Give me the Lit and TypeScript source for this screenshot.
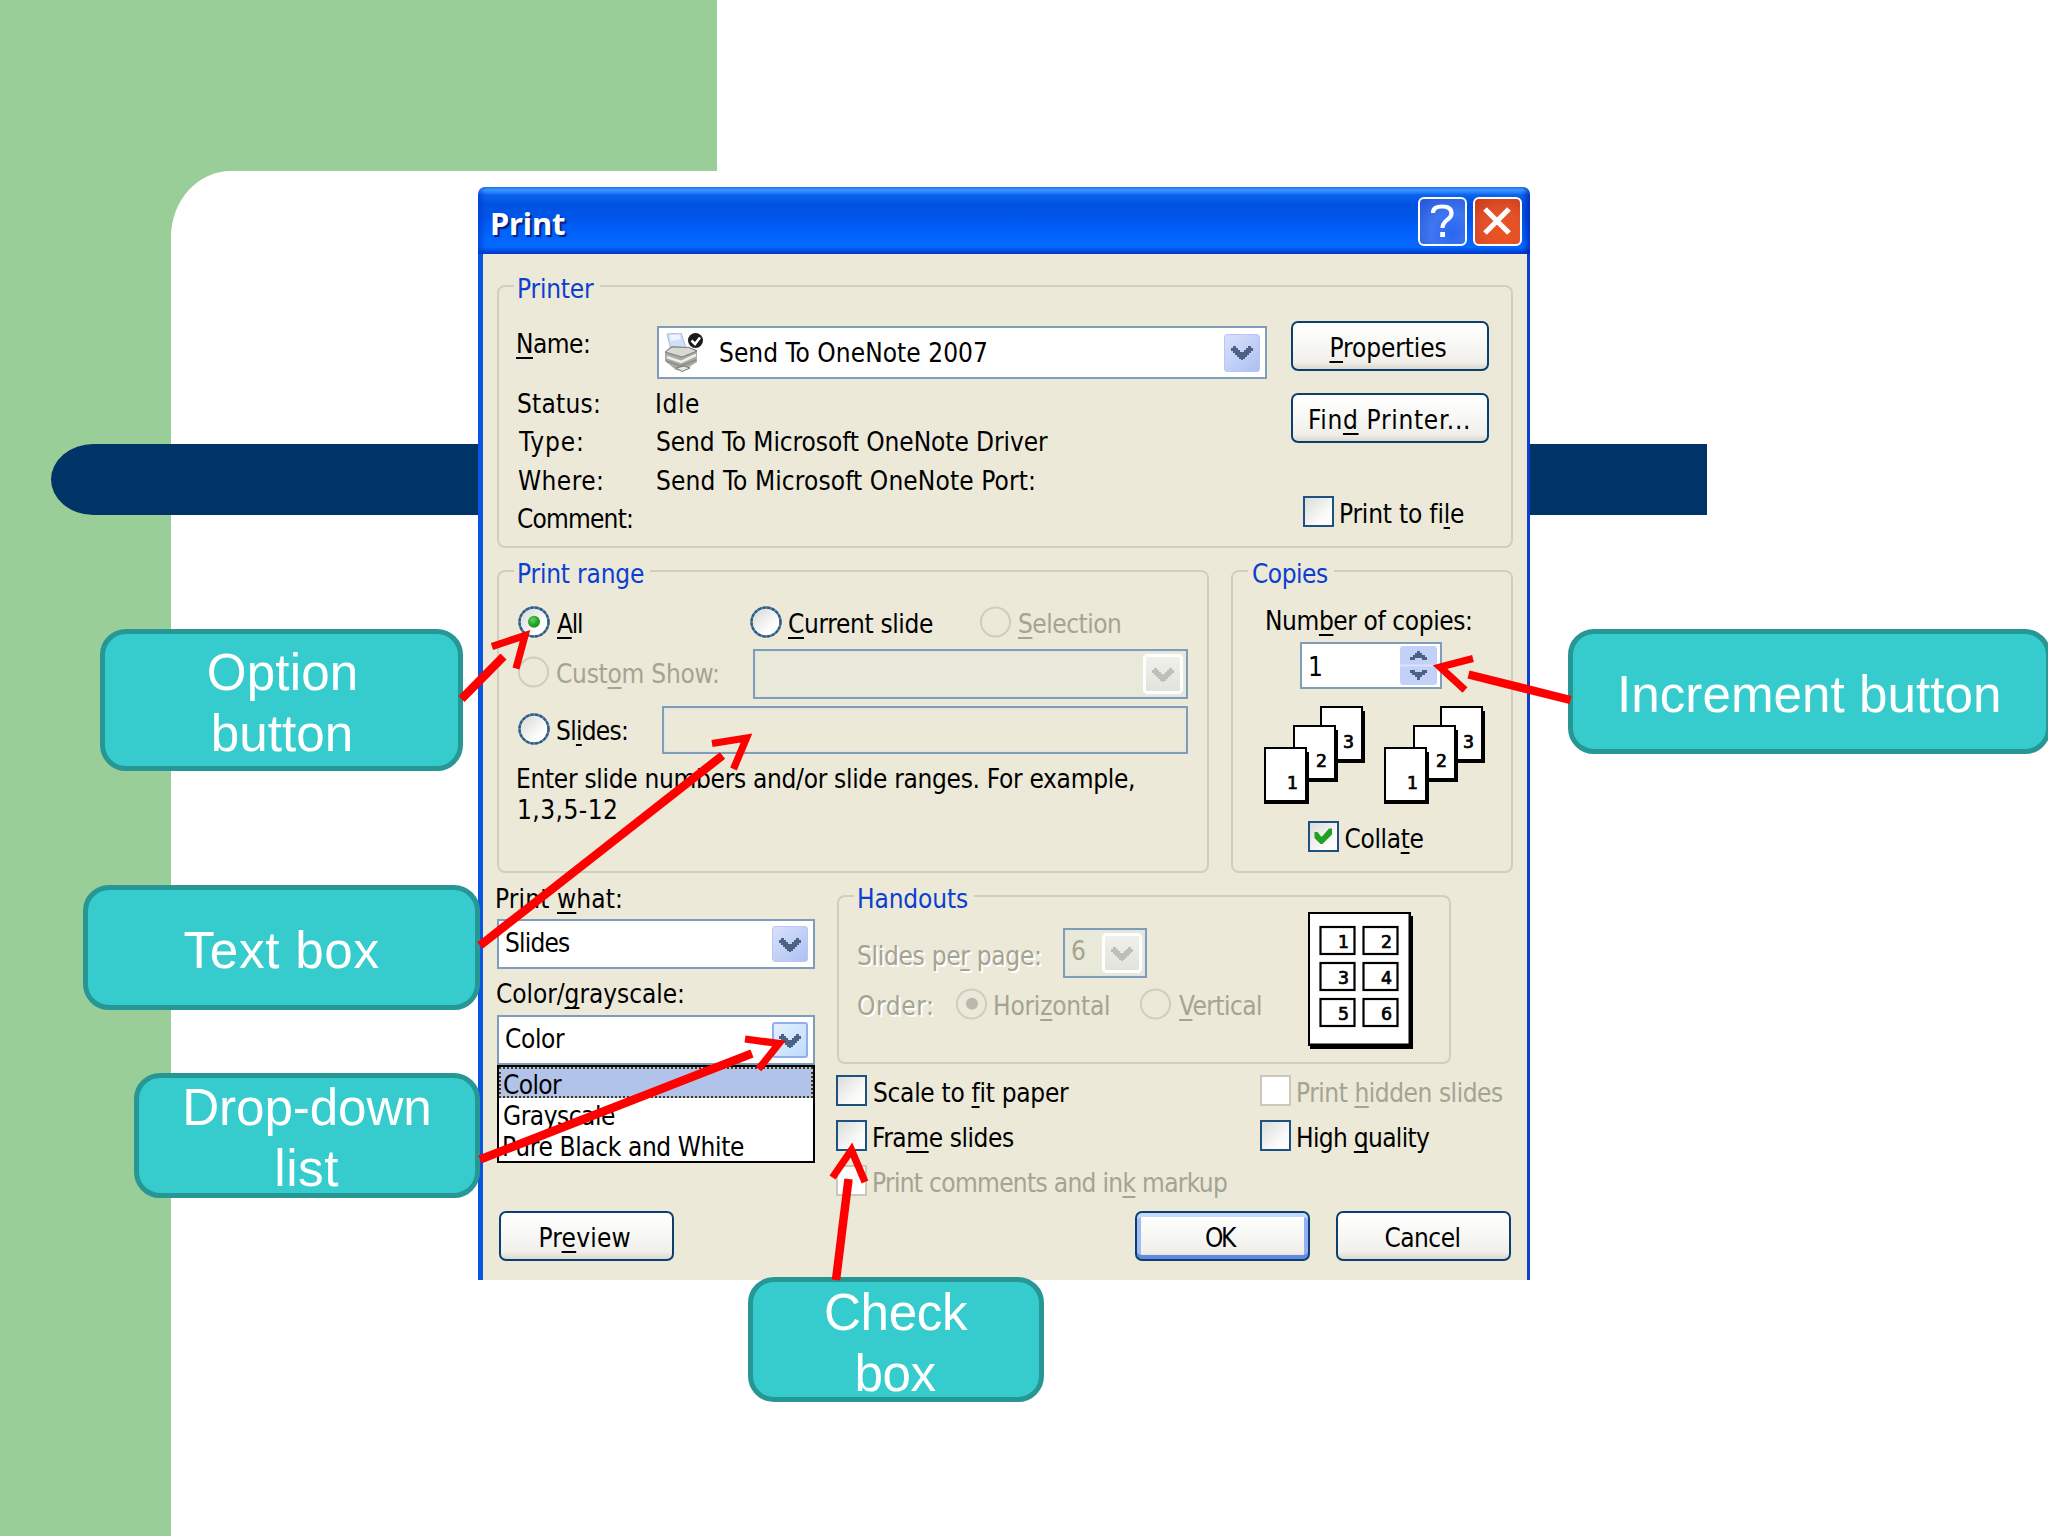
import { LitElement, html, css, svg, nothing } from "lit";
import { customElement, property } from "lit/decorators.js";
import { classMap } from "lit/directives/class-map.js";

const UI_FONT = '"DejaVu Sans Condensed", "DejaVu Sans", sans-serif';
const TITLE_FONT = '"Noto Sans", "Open Sans", sans-serif';
const CALLOUT_FONT = '"Liberation Sans", Arial, sans-serif';

const pen = document.createElement("canvas").getContext("2d")!;

/** One line of text whose drawn width is `w`; "&" marks the mnemonic letter. */
@customElement("fit-text")
class FitText extends LitElement {
  @property() t = "";
  @property({ type: Number }) w = 0;
  @property({ type: Number }) size = 26;
  @property() face = "ui";

  static styles = css`
    :host { display: block; flex: none; height: 30px; line-height: 32px; white-space: pre; }
    .ui { font-family: "DejaVu Sans Condensed", "DejaVu Sans", sans-serif; }
    .title { font-family: "Noto Sans", "Open Sans", sans-serif; font-weight: 700; }
    .callout { font-family: "Liberation Sans", Arial, sans-serif; }
    .line { display: block; line-height: inherit; }
    u { text-decoration: underline; text-decoration-thickness: 2px; text-underline-offset: 4px; text-decoration-skip-ink: none; }
  `;

  render() {
    const plain = this.t.replace("&", "");
    const font = this.face === "title" ? TITLE_FONT : this.face === "callout" ? CALLOUT_FONT : UI_FONT;
    pen.font = `${this.face === "title" ? "bold " : ""}${this.size}px ${font}`;
    const m = pen.measureText(plain);
    const ink = m.actualBoundingBoxLeft + m.actualBoundingBoxRight;
    const gap = plain.length > 1 ? (this.w - ink) / (plain.length - 1) : 0;
    const at = this.t.indexOf("&");
    return html`<span
      class="line ${this.face}"
      style="width:${this.w}px;font-size:${this.size}px;letter-spacing:${gap.toFixed(3)}px;text-indent:${(m.actualBoundingBoxLeft + 1).toFixed(2)}px"
      >${at < 0
        ? plain
        : html`${this.t.slice(0, at)}<u>${this.t[at + 1]}</u>${this.t.slice(at + 2)}`}</span>`;
  }
}

@customElement("xp-button")
class XpButton extends LitElement {
  @property() t = "";
  @property({ type: Number }) w = 0;
  @property({ type: Boolean }) primary = false;

  static styles = css`
    :host { display: block; flex: none; height: 50px; }
    .face {
      box-sizing: border-box; height: 100%; display: flex; justify-content: center; padding: 9px 4px 0 0;
      border: 2.5px solid #0b3f6f; border-radius: 7px; color: #000;
      background: linear-gradient(#fff 0%, #f8f8f5 45%, #f0efea 85%, #dcd8cd 100%);
    }
    .primary { box-shadow: inset 0 5px 0 -1px #c4d9fb, inset 0 -5px 0 -1px #6289e2, inset 5px 0 0 -1px #a3bdf3, inset -5px 0 0 -1px #94b0f0; }
  `;
  render() {
    return html`<div class=${classMap({ face: true, primary: this.primary })}><fit-text t=${this.t} w=${this.w}></fit-text></div>`;
  }
}

@customElement("xp-check")
class XpCheck extends LitElement {
  @property() t = "";
  @property({ type: Number }) w = 0;
  @property({ type: Boolean }) checked = false;
  @property({ type: Boolean }) disabled = false;

  static styles = css`
    :host { display: block; flex: none; height: 31px; }
    .row { display: flex; gap: 6px; color: #000; }
    .box { flex: none; box-sizing: border-box; width: 31px; height: 31px; border: 2px solid #1d5180; background: linear-gradient(135deg, #dcdcd9, #fbfbfa 70%, #fff); }
    .off { color: #a5a392; }
    .off .box { border-color: #cac8bb; background: #fff; }
    fit-text { margin-top: 2px; }
    svg { display: block; }
  `;
  render() {
    return html`<div class=${classMap({ row: true, off: this.disabled })}>
      <div class="box">
        ${this.checked
          ? html`<svg width="27" height="27" viewBox="0 0 27 27"><path fill="#21a121" d="M4.500 9h3l3.500 4.500h1l7-8h3v6L12.500 21h-2L4.500 15z" /></svg>`
          : nothing}
      </div>
      <fit-text t=${this.t} w=${this.w}></fit-text>
    </div>`;
  }
}

@customElement("xp-radio")
class XpRadio extends LitElement {
  @property() t = "";
  @property({ type: Number }) w = 0;
  @property({ type: Boolean }) checked = false;
  @property({ type: Boolean }) disabled = false;

  static styles = css`
    :host { display: block; flex: none; height: 32px; }
    .row { display: flex; gap: 6px; color: #000; }
    .off { color: #a5a392; }
    fit-text { margin-top: 2px; }
    svg { display: block; flex: none; }
  `;
  render() {
    return html`<div class=${classMap({ row: true, off: this.disabled })}>
      <svg width="32" height="32" viewBox="0 0 32 32">
        <defs>
          <linearGradient id="f" x1="0" y1="0" x2="1" y2="1">
            <stop offset="0.1" stop-color="#dadad6" /><stop offset="0.7" stop-color="#fff" />
          </linearGradient>
          <radialGradient id="g" cx="0.4" cy="0.35">
            <stop offset="0" stop-color="#5fd45f" /><stop offset="1" stop-color="#1f9a1f" />
          </radialGradient>
        </defs>
        ${this.disabled
          ? svg`<circle cx="15.5" cy="16" r="14.6" fill="none" stroke="#cfcdbd" stroke-width="2"/>`
          : svg`<circle cx="16" cy="16" r="14.5" fill="url(#f)" stroke="#5d83a3" stroke-width="2.4"/>
                <circle cx="16" cy="16" r="14.5" fill="none" stroke="#2b5b86" stroke-width="2.2" stroke-dasharray="3.2 1.4"/>`}
        ${this.checked
          ? svg`<circle cx="16" cy="15.700" r="6" fill=${this.disabled ? "#b9b8ad" : "url(#g)"}/>`
          : nothing}
      </svg>
      <fit-text t=${this.t} w=${this.w}></fit-text>
    </div>`;
  }
}

@customElement("xp-combo")
class XpCombo extends LitElement {
  @property() t = "";
  @property({ type: Number }) w = 0;
  @property({ type: Boolean }) disabled = false;
  @property({ type: Boolean }) hot = false;

  static styles = css`
    :host { display: block; flex: none; height: 50px; }
    .frame { box-sizing: border-box; height: 100%; display: flex; align-items: center; border: 2px solid #7f9db9; background: #fff; color: #000; padding: 0 5px 0 6px; }
    .text { flex: 1; display: flex; align-items: center; }
    .text fit-text { margin-top: var(--text-shift, -4px); }
    .drop { flex: none; box-sizing: border-box; width: 36px; height: var(--drop-height, 36px); border-radius: 3px; border: 1px solid #b9c8f3; background: linear-gradient(135deg, #d8e1fb, #b9c9f5 75%, #aebef0); display: flex; align-items: center; justify-content: center; color: #4d6185; }
    .hot .drop { border: 2px solid #8fb0ea; background: linear-gradient(135deg, #e2f0ff, #bfdcfb); }
    .off { background: #e8e9d8; color: #a5a392; padding-right: 2px; box-shadow: inset 0 0 0 1px #dfe5e4; }
    .off .drop { border: 2px solid #fff; outline: 1px solid #fff; width: 38px; height: 38px; background: linear-gradient(#f0f0ec, #e3e3dd); color: #bfbfba; margin-right: 2px; }
    svg { display: block; }
  `;
  render() {
    return html`<div class=${classMap({ frame: true, off: this.disabled, hot: this.hot })}>
      <slot name="icon"></slot>
      <div class="text">${this.t ? html`<fit-text t=${this.t} w=${this.w}></fit-text>` : nothing}</div>
      <div class="drop">
        <svg width="22" height="15" viewBox="0 0 22 15"><path fill="currentColor" d="M0 3h2V1h3v2h2v2h2v2h4V5h2V3h2V1h3v2h2v3h-2v2h-2v2h-2v2h-2v2h-2v1h-2v-1H8v-2H6v-2H4V8H2V6H0z" /></svg>
      </div>
    </div>`;
  }
}

@customElement("xp-group")
class XpGroup extends LitElement {
  @property() t = "";
  @property({ type: Number }) w = 0;
  static styles = css`
    :host { display: block; flex: none; box-sizing: border-box; border: 2px solid #d0cfbe; border-radius: 8px; }
    .legend { width: max-content; margin: -14px 0 0 15px; padding: 0 7px 0 4px; background: #ece9d8; color: #0a3fcf; }
  `;
  render() {
    return html`<div class="legend"><fit-text t=${this.t} w=${this.w}></fit-text></div><slot></slot>`;
  }
}

@customElement("print-dialog")
class PrintDialog extends LitElement {
  static styles = css`
    :host { display: flex; flex-direction: column; box-sizing: border-box; width: 1052px; height: 1093px; color: #000; }
    svg { display: block; flex: none; }
    .bar {
      box-sizing: border-box; height: 67px; flex: none; display: flex; align-items: flex-start; gap: 6px; padding: 10px 8px 0 13px;
      border-radius: 7px 7px 0 0; color: #fff;
      background:
        linear-gradient(90deg, rgba(0,50,200,.55), rgba(0,50,200,0) 8px, rgba(0,50,200,0) calc(100% - 8px), rgba(0,30,170,.7)),
        linear-gradient(#1a6ff0 0, #3a97ff 3px, #2a86fb 5px, #0a62ee 8px, #0053e1 17px, #0055e8 30px, #0060fb 44px, #0468ff 55px, #0468ff 60px, #0050e6 63px, #0038c4 67px);
    }
    .title { flex: 1; padding-top: 10px; text-shadow: 2px 2px 1px #0a1f7c; }
    .cap { box-sizing: border-box; width: 49px; height: 49px; border: 2.5px solid #fff; border-radius: 6px; flex: none; }
    .help { background: radial-gradient(circle at 70% 75%, #2a66f4, #3f76f0 45%, #2453d6 100%); }
    .close { background: radial-gradient(circle at 60% 70%, #ee5420, #e0512b 50%, #c93a18 100%); }
    .body { flex: 1; display: flex; flex-direction: column; background: #ece9d8; border-left: 5px solid #0a55e0; border-right: 3px solid #0b3fcc; padding: 31px 14px 0 14px; }
    .row { display: flex; align-items: flex-start; }

    .printer { height: 263px; }
    .left { margin-left: 18px; }
    .name { margin-top: 23px; }
    .name > fit-text { width: 140px; margin-top: 2px; }
    .device { width: 610px; height: 53px; --text-shift: -1px; --drop-height: 38px; }
    .device svg { margin: 0 15px 0 -1px; }
    .facts { margin-top: 9px; display: grid; grid-template-columns: 139px auto; grid-auto-rows: 38.3px; }
    .actions { display: flex; flex-direction: column; margin: 18px 0 0 24px; }
    .actions xp-button { width: 198px; margin-bottom: 22px; }
    .actions xp-check { margin: 31px 0 0 12px; }

    .middle { margin-top: 22px; gap: 22px; }
    .range { width: 712px; height: 303px; }
    .copies { width: 282px; height: 303px; }
    .options { display: grid; grid-template-columns: 232px 230px auto; margin: 18px 0 0 19px; }
    .custom { margin: 11px 0 0 19px; }
    .custom xp-radio { width: 235px; margin-top: 7px; }
    .custom xp-combo { width: 435px; }
    .slides { margin: 7px 0 0 19px; }
    .slides xp-radio { width: 144px; margin-top: 7px; }
    .field { box-sizing: border-box; width: 526px; height: 48px; border: 2px solid #7f9db9; box-shadow: inset 0 0 0 1px #dfe5e4; }
    .hint { margin: 9px 0 0 18px; display: grid; row-gap: 1px; }
    .hint fit-text + fit-text { margin-left: 1px; }
    .count { margin: 17px 0 0 33px; }
    .spin { box-sizing: border-box; display: flex; justify-content: space-between; width: 142px; height: 47px; margin: 7px 0 0 67px; padding: 2px 3px 0 7px; border: 2px solid #7f9db9; background: #fff; }
    .spin fit-text { margin-top: 5px; }
    .pages { margin: 17px 0 0 31px; }
    .copies xp-check { margin: 16px 0 0 74.500px; }
    .num { font: 400 18px "DejaVu Sans Condensed", "DejaVu Sans", sans-serif; stroke: #000; stroke-width: .7; }

    .what { width: 318px; display: flex; flex-direction: column; }
    .what > fit-text { margin-left: -1px; }
    .l1 { margin-top: 10px; }
    .c1 { margin-top: 6px; }
    .l2 { margin-top: 9px; }
    .c2 { margin-top: 7px; }
    .list { box-sizing: border-box; height: 98px; border: 2.5px solid #000; background: #fff; display: grid; grid-template-rows: 31px 31px 31px; }
    .item { padding-left: 4px; }
    .item fit-text { margin-top: 2px; }
    .on { background: #b2c3e9; outline: 2px dotted #463a18; outline-offset: -2px; }
    .preview { width: 175px; margin: 48px 0 0 2px; }
    .rest { margin-left: 22px; }
    .handouts { width: 614px; height: 169px; margin-top: 22px; }
    .setup { width: 451px; margin-left: 18px; color: #a5a392; text-shadow: none; }
    .emboss { text-shadow: 2px 2px 0 #fff; }
    .per { margin-top: 15px; }
    .per fit-text { width: 206px; margin-top: 12px; }
    .per xp-combo { width: 84px; --text-shift: -6px; }
    .order { margin-top: 10px; }
    .order fit-text { width: 99px; margin-top: 2px; }
    .order xp-radio:first-of-type { width: 184px; }
    .thumb { margin-top: -1px; }
    .checks { margin: 10.500px 0 0 -1px; display: grid; grid-template-columns: 424px auto; row-gap: 14.4px; }
    .foot { margin: 14.500px 0 0 298px; gap: 26px; }
    .foot xp-button { width: 175px; }
  `;

  private page(x: number, y: number, n: number) {
    return svg`<rect x=${x + 2} y=${y + 5} width="43" height="52" fill="#000"/>
      <rect x=${x} y=${y} width="43" height="57" fill="#000"/>
      <rect x=${x + 2} y=${y + 2} width="39" height="51" fill="#fff"/>
      <text class="num" x=${x + 34} y=${y + 42} text-anchor="end" textLength="11" lengthAdjust="spacingAndGlyphs">${n}</text>`;
  }

  private stack(x: number) {
    return svg`${this.page(x + 56, 0, 3)}${this.page(x + 29, 19, 2)}${this.page(x, 41, 1)}`;
  }

  render() {
    return html`
      <div class="bar">
        <div class="title"><fit-text face="title" size="31" t="Print" w="73"></fit-text></div>
        <div class="cap help">
          <svg width="44" height="44" viewBox="0 0 44 44"><path d="M13 14C13 9 17 7.5 22 7.5C28 7.5 31.500 10 31.500 14.500C31.500 21 22.500 20.500 22.500 29" fill="none" stroke="#fff" stroke-width="4.200" /><rect x="20.200" y="33" width="4.800" height="5" fill="#fff" /></svg>
        </div>
        <div class="cap close">
          <svg width="44" height="44" viewBox="0 0 44 44"><path d="M10 10L34 34M34 10L10 34" stroke="#fff" stroke-width="5.200" /></svg>
        </div>
      </div>
      <div class="body">
        <xp-group class="printer" t="Printer" w="75">
          <div class="row">
            <div class="left">
              <div class="row name">
                <fit-text t="&Name:" w="71"></fit-text>
                <xp-combo class="device" t="Send To OneNote 2007" w="266">
                  <svg slot="icon" width="40" height="39" viewBox="0 0 40 39">
                    <path d="M3 1L17 0L22 15L7 17Z" fill="#cfe0fa" stroke="#a9bedd" />
                    <path d="M6 2L15 1.500L17 6L7 8Z" fill="#eef5ff" />
                    <path d="M1 19L7 13L24 14L33 17L33 29L19 38L12 37L1 28Z" fill="#a9a9a4" />
                    <path d="M1 19L8 14L25 14.500L33 18L18 24Z" fill="#d9d9d4" stroke="#80807b" stroke-width="1" />
                    <path d="M3 24L17 29L32 22" fill="none" stroke="#eeeeea" stroke-width="2.500" />
                    <path d="M2 28L17 33L32 27" fill="none" stroke="#8a8a86" stroke-width="1.600" />
                    <path d="M12 35L20 33L26 35L18 38.500Z" fill="#e8e8e3" stroke="#77776f" />
                    <circle cx="31.500" cy="7.500" r="7.500" fill="#1b1b1b" />
                    <path d="M27.500 7.500L31 11L36 4.500" fill="none" stroke="#fff" stroke-width="2.500" />
                  </svg>
                </xp-combo>
              </div>
              <div class="facts">
                <fit-text t="Status:" w="81"></fit-text><fit-text t="Idle" w="42"></fit-text>
                <fit-text t="Type:" w="64"></fit-text><fit-text t="Send To Microsoft OneNote Driver" w="391"></fit-text>
                <fit-text t="Where:" w="84"></fit-text><fit-text t="Send To Microsoft OneNote Port:" w="377"></fit-text>
                <fit-text t="Comment:" w="114"></fit-text>
              </div>
            </div>
            <div class="actions">
              <xp-button t="&Properties" w="115"></xp-button>
              <xp-button t="Fin&d Printer..." w="158"></xp-button>
              <xp-check t="Print to fi&le" w="123"></xp-check>
            </div>
          </div>
        </xp-group>

        <div class="row middle">
          <xp-group class="range" t="Print range" w="125">
            <div class="options">
              <xp-radio t="&All" w="25" checked></xp-radio>
              <xp-radio t="&Current slide" w="144"></xp-radio>
              <xp-radio t="&Selection" w="101" disabled></xp-radio>
            </div>
            <div class="row custom">
              <xp-radio t="Cust&om Show:" w="161" disabled></xp-radio>
              <xp-combo disabled></xp-combo>
            </div>
            <div class="row slides">
              <xp-radio t="Sl&ides:" w="70"></xp-radio>
              <div class="field"></div>
            </div>
            <div class="hint">
              <fit-text t="Enter slide numbers and/or slide ranges. For example," w="616"></fit-text>
              <fit-text t="1,3,5-12" w="97"></fit-text>
            </div>
          </xp-group>
          <xp-group class="copies" t="Copies" w="75">
            <fit-text class="count" t="Num&ber of copies:" w="204"></fit-text>
            <div class="spin">
              <fit-text t="1" w="10"></fit-text>
              <svg width="37" height="39" viewBox="0 0 37 39">
                <rect width="37" height="39" rx="3" fill="#c3d1f8" />
                <rect x="0" y="18.500" width="37" height="2" fill="#dbe4fc" />
                <path fill="#4d6185" d="M17 5h3v2h2v2h3v2h2v3h-5v-2h-7v2h-5v-3h3V9h2V7h2zM10 24h5v2h7v-2h5v3h-2v2h-3v2h-2v3h-3v-3h-2v-2h-3v-2h-2z" />
              </svg>
            </div>
            <svg class="pages" width="222" height="99" viewBox="0 0 222 99">${this.stack(0)}${this.stack(120)}</svg>
            <xp-check t="Colla&te" w="78" checked></xp-check>
          </xp-group>
        </div>

        <div class="row">
          <div class="what">
            <fit-text class="l1" t="Print &what:" w="124"></fit-text>
            <xp-combo class="c1" t="Slides" w="64"></xp-combo>
            <fit-text class="l2" t="Color/&grayscale:" w="186"></fit-text>
            <xp-combo class="c2" t="Color" w="59" hot></xp-combo>
            <div class="list">
              <div class="item on"><fit-text t="Color" w="58"></fit-text></div>
              <div class="item"><fit-text t="Grayscale" w="111"></fit-text></div>
              <div class="item"><fit-text t="Pure Black and White" w="240"></fit-text></div>
            </div>
            <xp-button class="preview" t="Pr&eview" w="90"></xp-button>
          </div>
          <div class="rest">
            <xp-group class="handouts" t="Handouts" w="109">
              <div class="row">
                <div class="setup">
                  <div class="row per">
                    <fit-text class="emboss" t="Slides pe&r page:" w="182"></fit-text>
                    <xp-combo t="6" w="13" disabled></xp-combo>
                  </div>
                  <div class="row order">
                    <fit-text class="emboss" t="Order:" w="74"></fit-text>
                    <xp-radio t="Hori&zontal" w="114" checked disabled></xp-radio>
                    <xp-radio t="&Vertical" w="82" disabled></xp-radio>
                  </div>
                </div>
                <svg class="thumb" width="105" height="137" viewBox="0 0 105 137">
                  <rect x="2" y="4" width="103" height="133" fill="#000" />
                  <rect width="103" height="134" fill="#000" />
                  <rect x="2" y="2" width="98.500" height="129.500" fill="#fff" />
                  ${[1, 2, 3, 4, 5, 6].map((n, i) => {
                    const x = i % 2 ? 55.5 : 12.5;
                    const y = 15 + Math.floor(i / 2) * 36;
                    return svg`<rect x=${x} y=${y} width="34" height="27" fill="#fff" stroke="#000" stroke-width="2.2"/>
                      <text class="num" x=${x + 28.5} y=${y + 20.5} text-anchor="end" textLength="11" lengthAdjust="spacingAndGlyphs">${n}</text>`;
                  })}
                </svg>
              </div>
            </xp-group>
            <div class="checks">
              <xp-check t="Scale to &fit paper" w="195"></xp-check>
              <xp-check t="Print &hidden slides" w="205" disabled></xp-check>
              <xp-check t="Fra&me slides" w="140"></xp-check>
              <xp-check t="High &quality" w="132"></xp-check>
              <xp-check t="Print comments and in&k markup" w="353" disabled></xp-check>
            </div>
            <div class="row foot">
              <xp-button t="OK" w="31" primary></xp-button>
              <xp-button t="Cancel" w="74"></xp-button>
            </div>
          </div>
        </div>
      </div>
    `;
  }
}

interface Callout {
  key: string;
  lines: [string, number][];
}

const CALLOUTS: Callout[] = [
  { key: "option", lines: [["Option", 147], ["button", 137]] },
  { key: "textbox", lines: [["Text box", 195]] },
  { key: "dropdown", lines: [["Drop-down", 243], ["list", 61]] },
  { key: "check", lines: [["Check", 142], ["box", 79]] },
  { key: "increment", lines: [["Increment button", 378]] },
];

/* Shaft segment followed by the open head: wing, tip, wing. */
const ARROWS = [
  { shaft: "M461.500 699L503.500 656.500", head: "M492 646.500L525 635.500L516 668.500" },
  { shaft: "M480 945.500L722.500 755.500", head: "M712 743.500L746.500 738L733.500 769" },
  { shaft: "M480 1159.500L752 1053.500", head: "M745 1039L779 1043.500L758.500 1069" },
  { shaft: "M836 1280L848.500 1179", head: "M832.500 1177.500L851.500 1150L865 1182" },
  { shaft: "M1570.500 700L1468.500 674.500", head: "M1473 658.500L1440 667L1465 690" },
];

@customElement("app-root")
class AppRoot extends LitElement {
  static styles = css`
    :host { display: block; }
    .slide { position: relative; width: 2048px; height: 1536px; overflow: hidden; background: #fff; }
    .band, .side, .paper, .rule, .note, .arrows, print-dialog { position: absolute; }
    .band { left: 0; top: 0; width: 717px; height: 300px; background: #99ce99; }
    .side { left: 0; top: 0; width: 171px; height: 1536px; background: #99ce99; }
    .paper { left: 171px; top: 171px; width: 1877px; height: 1365px; background: #fff; border-radius: 60px 0 0 0 / 66px 0 0 0; }
    .rule { left: 51px; top: 443.500px; width: 1656px; height: 71.500px; background: #036; border-radius: 43px 0 0 43px / 36px 0 0 36px; }
    print-dialog { left: 478px; top: 187px; }
    .note {
      box-sizing: border-box; display: flex; flex-direction: column; align-items: center; justify-content: center; padding-top: 6px;
      border: 5.500px solid #269795; border-radius: 26px; background: #36cccd; color: #fff;
    }
    .note fit-text { height: 61px; line-height: 61px; }
    .option { left: 99.500px; top: 628.500px; width: 363.500px; height: 142px; }
    .textbox { left: 82.500px; top: 884.500px; width: 397px; height: 125px; }
    .dropdown { left: 134px; top: 1072.500px; width: 345.500px; height: 125px; }
    .check { left: 748px; top: 1277px; width: 296px; height: 125px; }
    .increment { left: 1567.500px; top: 628.500px; width: 483px; height: 125px; }
    .arrows { left: 0; top: 0; fill: none; stroke: #fe0000; }
    .shaft { stroke-width: 8.500; }
    .head { stroke-width: 7.200; stroke-miterlimit: 10; }
  `;

  render() {
    return html`<div class="slide">
      <div class="band"></div>
      <div class="side"></div>
      <div class="paper"></div>
      <div class="rule"></div>
      <print-dialog></print-dialog>
      ${CALLOUTS.map(
        (c) => html`<div class="note ${c.key}">
          ${c.lines.map(([t, w]) => html`<fit-text face="callout" size="51.2" t=${t} w=${w}></fit-text>`)}
        </div>`
      )}
      <svg class="arrows" width="2048" height="1536" viewBox="0 0 2048 1536">
        ${ARROWS.map((a) => svg`<path class="shaft" d=${a.shaft}/><path class="head" d=${a.head}/>`)}
      </svg>
    </div>`;
  }
}
